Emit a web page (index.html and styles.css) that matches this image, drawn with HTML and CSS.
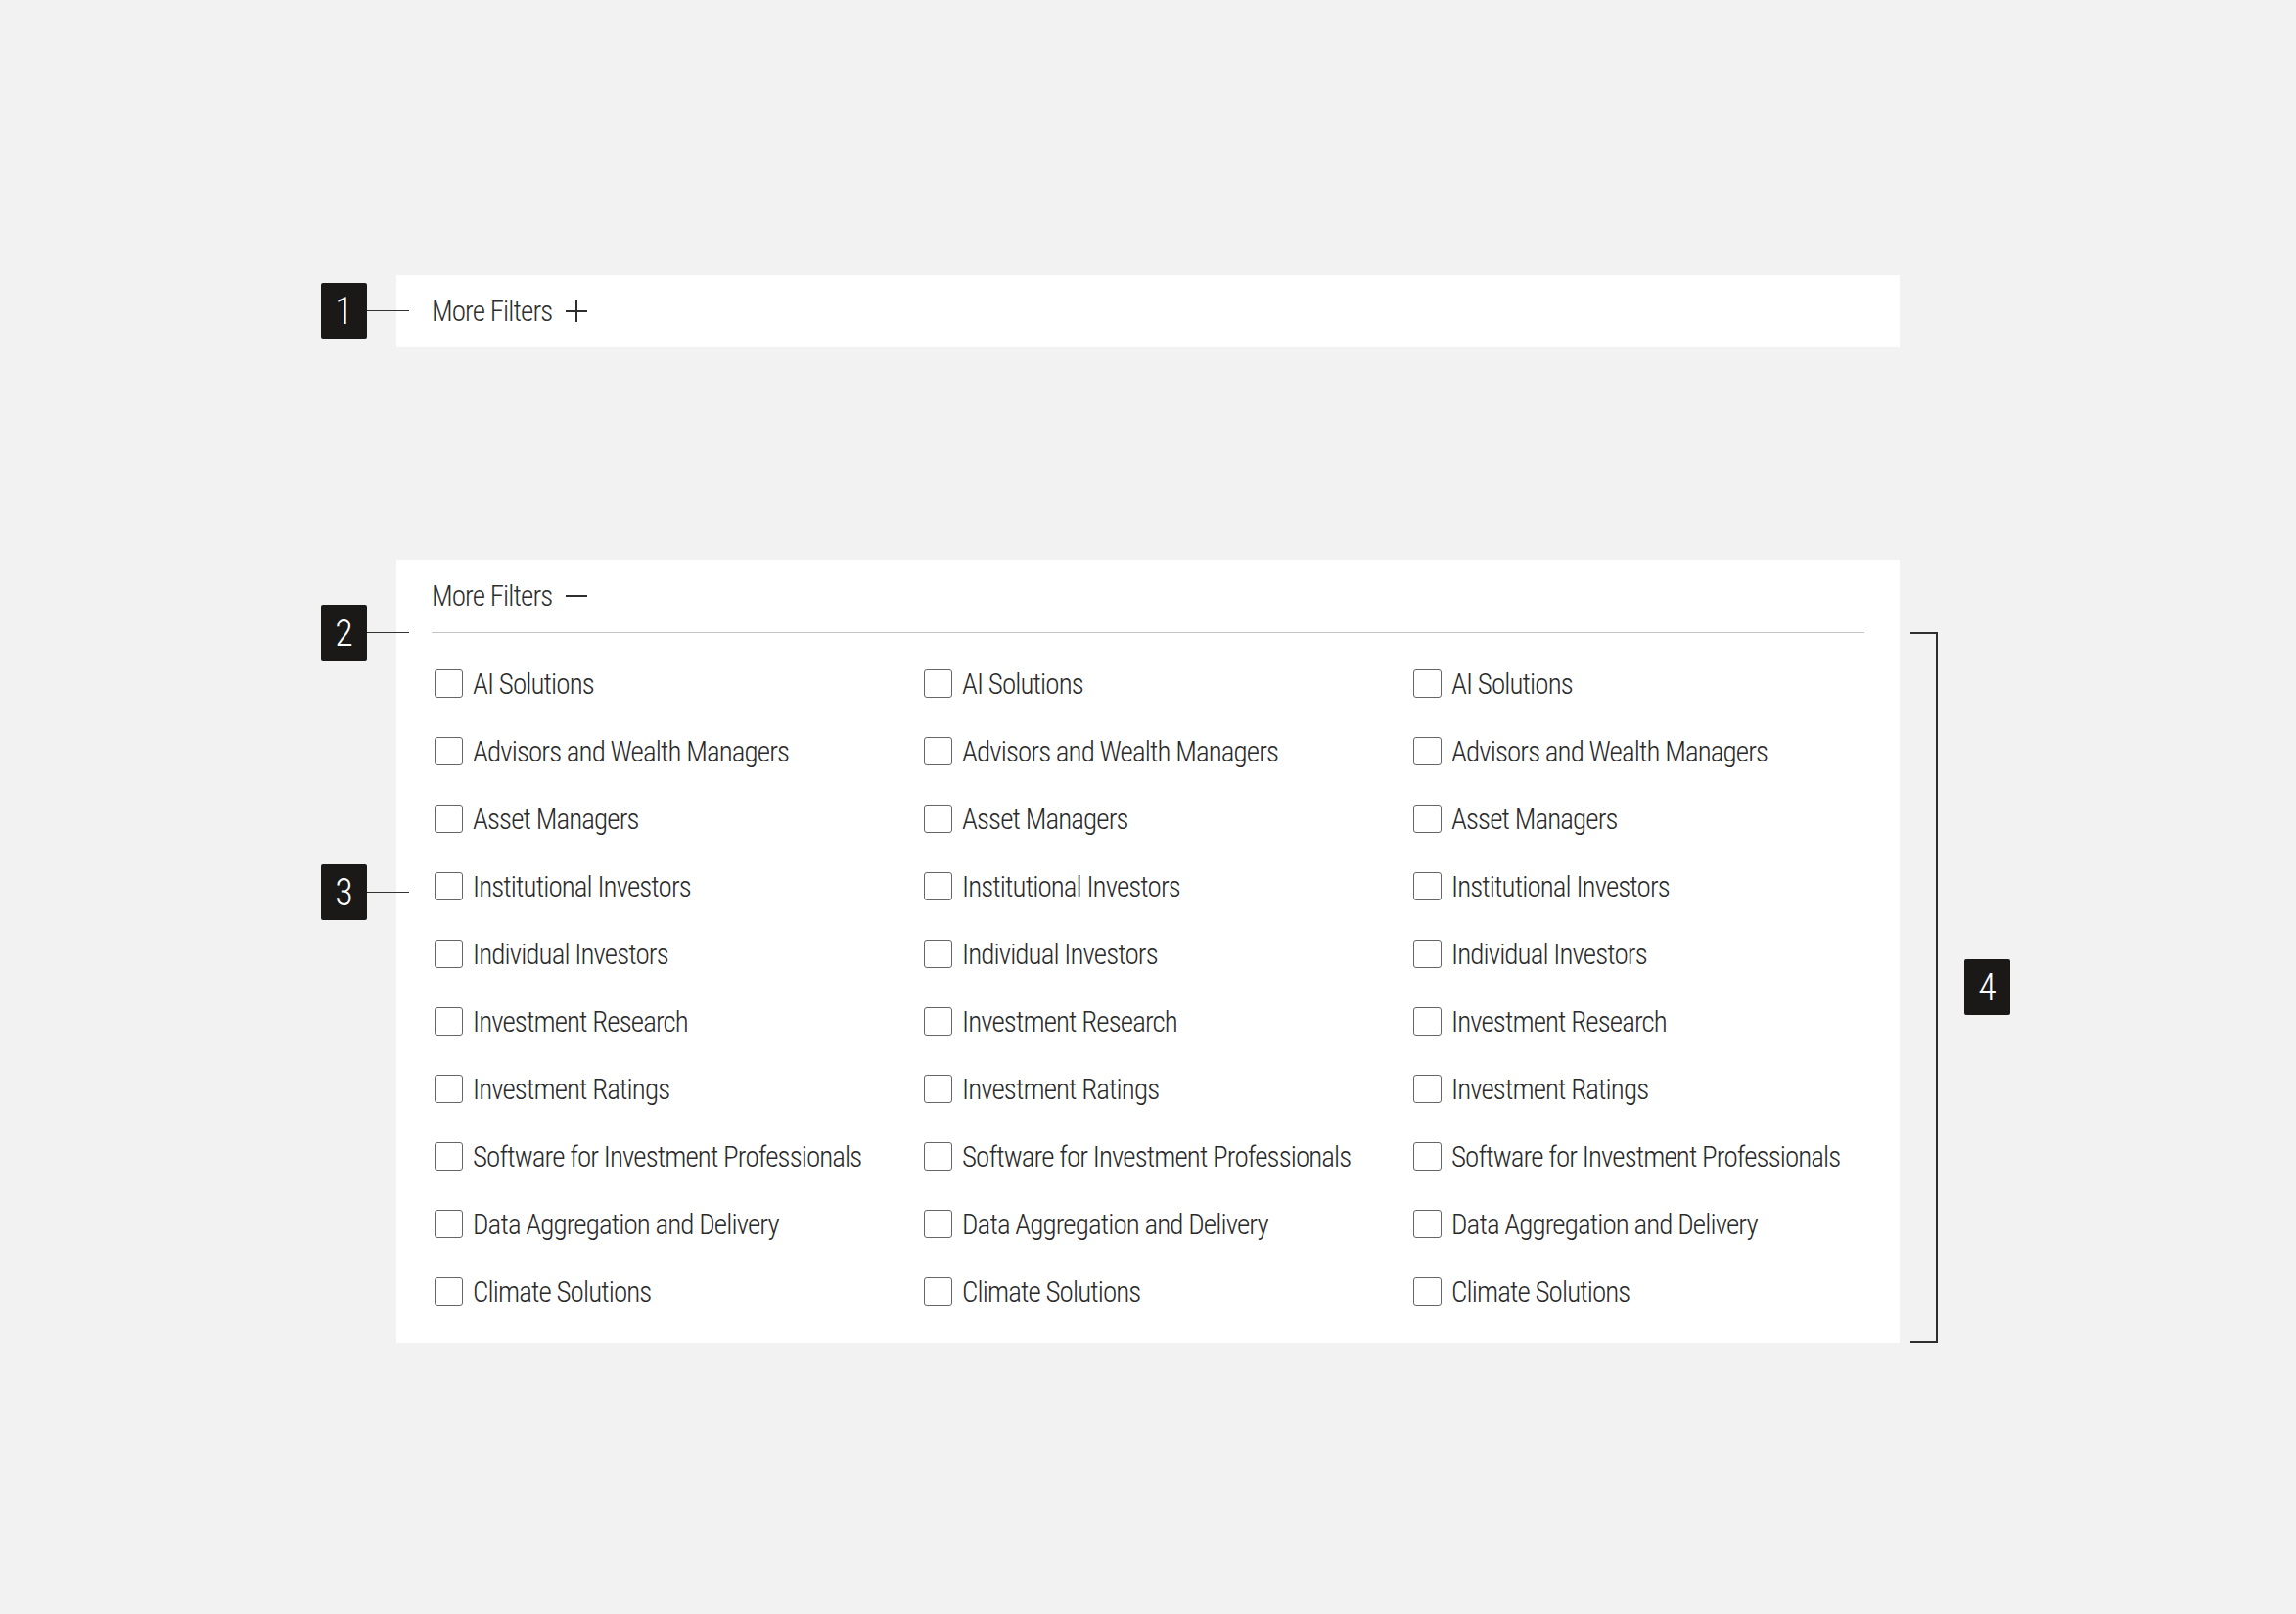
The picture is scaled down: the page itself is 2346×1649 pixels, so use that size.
FILE: index.html
```html
<!DOCTYPE html>
<html lang="en">
<head>
  <meta charset="UTF-8">
  <title>More Filters - anatomy</title>
  <link rel="stylesheet" href="styles.css">
</head>
<body>
  <main class="canvas">

    <!-- collapsed state -->
    <section class="panel panel-closed">
      <div class="callout c1"><span class="marker">1</span><span class="leader"></span></div>
      <button class="toggle">More Filters
        <svg class="icon" viewBox="0 0 22 22"><path d="M11 0V22M0 11H22"/></svg>
      </button>
    </section>

    <!-- expanded state -->
    <section class="panel panel-open">
      <div class="callout c2"><span class="marker">2</span><span class="leader"></span></div>
      <div class="callout c3"><span class="marker">3</span><span class="leader"></span></div>
      <div class="bracket"></div>
      <span class="marker m4">4</span>

      <div class="panel-head">
        <button class="toggle">More Filters
          <svg class="icon" viewBox="0 0 22 22"><path d="M0 11H22"/></svg>
        </button>
      </div>

      <div class="options" id="options"></div>
    </section>

  </main>

  <script>
    var labels = [
      "AI Solutions",
      "Advisors and Wealth Managers",
      "Asset Managers",
      "Institutional Investors",
      "Individual Investors",
      "Investment Research",
      "Investment Ratings",
      "Software for Investment Professionals",
      "Data Aggregation and Delivery",
      "Climate Solutions"
    ];
    var list = document.getElementById("options");
    labels.forEach(function (text) {
      for (var col = 0; col < 3; col++) {
        var item = document.createElement("label");
        item.className = "option";
        item.innerHTML = '<input type="checkbox"><span>' + text + '</span>';
        list.appendChild(item);
      }
    });
  </script>
</body>
</html>
```

FILE: styles.css
```css
* {
  box-sizing: border-box;
  margin: 0;
  padding: 0;
}

body {
  background: #f2f2f2;
  font-family: "Roboto Condensed", "DejaVu Sans Condensed", "Liberation Sans Narrow", "Open Sans", sans-serif;
  font-stretch: 75%;
  font-weight: 300;
  color: #2a2a2a;
}

.canvas {
  padding: 281px 0 0 405px;
}

.panel {
  position: relative;
  width: 1536px;
  background: #fff;
  padding: 0 36px;
}

.panel-closed {
  height: 74px;
  display: flex;
  align-items: center;
}

.panel-open {
  margin-top: 217px;
  height: 800px;
}

.toggle {
  display: flex;
  align-items: center;
  gap: 14px;
  background: none;
  border: none;
  font: inherit;
  font-size: 29px;
  letter-spacing: -0.9px;
  color: #2e2e2e;
  cursor: pointer;
}

.icon {
  width: 22px;
  height: 22px;
  stroke: #2e2e2e;
  stroke-width: 2;
  fill: none;
}

.panel-head {
  height: 75px;
  display: flex;
  align-items: center;
  border-bottom: 1px solid #c4c4c4;
}

.options {
  display: grid;
  grid-template-columns: 500px 500px 1fr;
  grid-auto-rows: 69px;
  padding: 17px 0 0 3px;
}

.option {
  display: flex;
  align-items: center;
  gap: 10px;
  font-size: 29px;
  letter-spacing: -0.9px;
  color: #2a2a2a;
  white-space: nowrap;
  cursor: pointer;
}

.option input {
  appearance: none;
  -webkit-appearance: none;
  width: 29px;
  height: 29px;
  border: 1.5px solid #666;
  border-radius: 3px;
  background: #fff;
  flex-shrink: 0;
}

/* annotation callouts */
.callout {
  position: absolute;
  left: -77px;
  display: flex;
  align-items: center;
}

.c1 { top: 8px; }
.c2 { top: 46px; }
.c3 { top: 311px; }

.marker {
  width: 47px;
  height: 57px;
  background: #1a1918;
  color: #fff;
  border-radius: 2px;
  display: flex;
  align-items: center;
  justify-content: center;
  font-size: 38px;
}

.leader {
  width: 43px;
  height: 1.5px;
  background: #333;
}

.bracket {
  position: absolute;
  left: 1547px;
  top: 74px;
  bottom: 0;
  width: 28px;
  border: 2px solid #2e2e2e;
  border-left: none;
}

.m4 {
  position: absolute;
  left: 1602px;
  top: 408px;
}
```
